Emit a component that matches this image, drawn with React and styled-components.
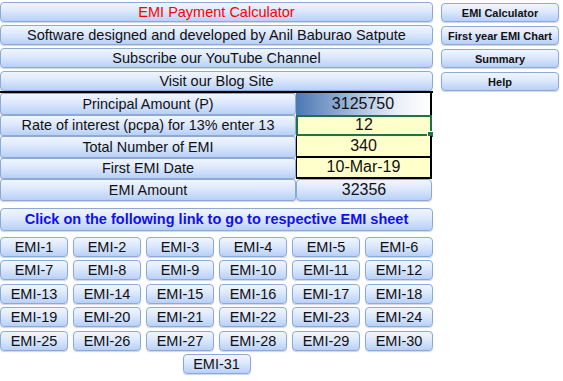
import React from "react";
import styled, { createGlobalStyle, css } from "styled-components";

const GlobalStyle = createGlobalStyle`
  html, body {
    margin: 0;
    padding: 0;
    background: #ffffff;
    font-family: "Liberation Sans", Arial, sans-serif;
  }
`;

const shape = css`
  box-sizing: border-box;
  border: 1px solid #8daad6;
  border-radius: 4px;
  background: linear-gradient(to bottom, #f1f6ff 0%, #dce8fc 45%, #b8d0f7 100%);
  box-shadow: 0 1px 1px rgba(60, 80, 120, 0.25);
  display: flex;
  align-items: center;
  justify-content: center;
  white-space: nowrap;
  color: #111111;
`;

const Page = styled.div`
  display: flex;
  align-items: flex-start;
  gap: 8px;
  width: 563px;
  height: 381px;
  overflow: hidden;
`;

const LeftColumn = styled.div`
  width: 433px;
  display: flex;
  flex-direction: column;
  padding-top: 2px;
`;

const Banners = styled.div`
  display: flex;
  flex-direction: column;
  gap: 3px;
`;

const Banner = styled.div`
  ${shape};
  height: 20px;
  font-size: 14.5px;
  color: ${(p) => p.$color || "#111111"};
`;

const Table = styled.div`
  margin-top: 0px;
  display: grid;
  grid-template-columns: 296px 136px;
  grid-auto-rows: 21.5px;
  border-top: 2px solid #000000;
`;

const Label = styled.div`
  ${shape};
  font-size: 14.4px;
  border-radius: 3px;
`;

const Value = styled.div`
  box-sizing: border-box;
  display: flex;
  align-items: center;
  justify-content: center;
  font-size: 16px;
  color: #111111;
  position: relative;
  ${(p) =>
    p.$kind === "gradient" &&
    css`
      background: linear-gradient(to right, #4c78b4 0%, #9db7d9 40%, #e9eff7 75%, #ffffff 100%);
      border-right: 2px solid #000000;
    `}
  ${(p) =>
    p.$kind === "selected" &&
    css`
      background: #ffffcc;
      border: 2px solid #217346;
    `}
  ${(p) =>
    p.$kind === "yellow" &&
    css`
      background: #ffffcc;
      border-left: 1px solid #000000;
      border-right: 2px solid #000000;
      border-bottom: 2px solid #000000;
    `}
  ${(p) =>
    p.$kind === "button" &&
    css`
      ${shape};
      font-size: 16px;
    `}
`;

const Handle = styled.span`
  position: absolute;
  right: -4px;
  bottom: -4px;
  width: 5px;
  height: 5px;
  background: #217346;
  border: 1px solid #ffffff;
`;

const LinkBanner = styled.div`
  ${shape};
  margin-top: 7px;
  height: 23px;
  font-size: 14.5px;
  font-weight: bold;
  color: #1010ee;
`;

const EmiGrid = styled.div`
  margin-top: 6px;
  display: grid;
  grid-template-columns: repeat(6, 68px);
  column-gap: 5px;
  row-gap: 3.5px;
`;

const EmiButton = styled.div`
  ${shape};
  height: 20px;
  font-size: 14.5px;
`;

const LastRow = styled.div`
  margin-top: 3.5px;
  display: flex;
  justify-content: center;
`;

const LastButton = styled(EmiButton)`
  width: 68px;
`;

const RightColumn = styled.div`
  width: 118px;
  padding-top: 3px;
  display: flex;
  flex-direction: column;
  gap: 4px;
`;

const SideButton = styled.div`
  ${shape};
  height: 19px;
  font-size: 11px;
  font-weight: bold;
`;

const rows = [
  { label: "Principal Amount (P)", value: "3125750", kind: "gradient" },
  { label: "Rate of interest (pcpa) for 13% enter 13", value: "12", kind: "selected" },
  { label: "Total Number of EMI", value: "340", kind: "yellow" },
  { label: "First EMI Date", value: "10-Mar-19", kind: "yellow" },
  { label: "EMI Amount", value: "32356", kind: "button" },
];

const sideLinks = ["EMI Calculator", "First year EMI Chart", "Summary", "Help"];

export default function App() {
  const sheets = Array.from({ length: 30 }, (_, i) => `EMI-${i + 1}`);
  return (
    <>
      <GlobalStyle />
      <Page>
        <LeftColumn>
          <Banners>
            <Banner $color="#ff0000">EMI Payment Calculator</Banner>
            <Banner>Software designed and developed by Anil Baburao Satpute</Banner>
            <Banner>Subscribe our YouTube Channel</Banner>
            <Banner>Visit our Blog Site</Banner>
          </Banners>
          <Table>
            {rows.map((r) => (
              <React.Fragment key={r.label}>
                <Label>{r.label}</Label>
                <Value $kind={r.kind}>
                  {r.value}
                  {r.kind === "selected" && <Handle />}
                </Value>
              </React.Fragment>
            ))}
          </Table>
          <LinkBanner>Click on the following link to go to respective EMI sheet</LinkBanner>
          <EmiGrid>
            {sheets.map((s) => (
              <EmiButton key={s}>{s}</EmiButton>
            ))}
          </EmiGrid>
          <LastRow>
            <LastButton>EMI-31</LastButton>
          </LastRow>
        </LeftColumn>
        <RightColumn>
          {sideLinks.map((l) => (
            <SideButton key={l}>{l}</SideButton>
          ))}
        </RightColumn>
      </Page>
    </>
  );
}
